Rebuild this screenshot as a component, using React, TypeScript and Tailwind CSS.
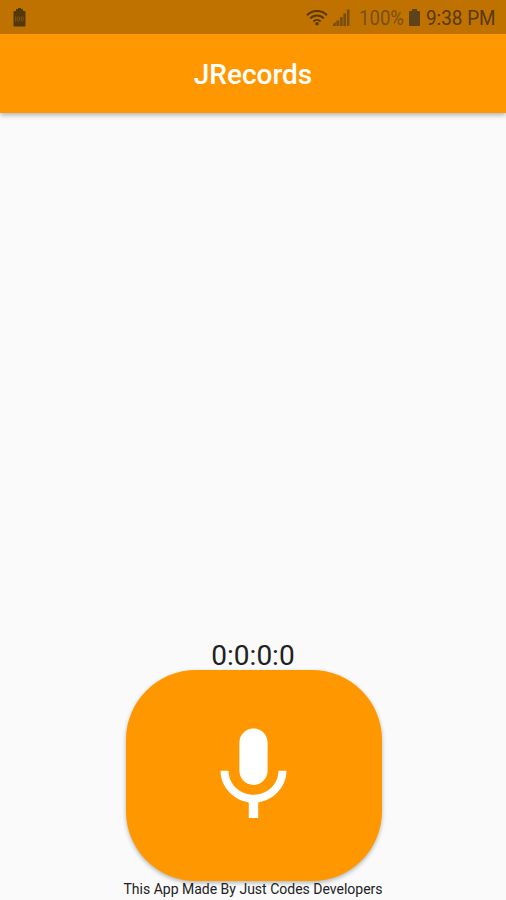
function BatteryNotice() {
	return (
		<svg width="13" height="19" viewBox="0 0 13 19">
			<path
				d="M3 1h2V0h3v1h2v2h1.500a1 1 0 0 1 1 1v13.500a1 1 0 0 1-1 1h-10a1 1 0 0 1-1-1V4a1 1 0 0 1 1-1H3z"
				fill="#553808"
			/>
			<g fill="none" stroke="#80571c" strokeWidth="0.9">
				<path d="M2.700 8.500v5" />
				<rect x="4.500" y="8.800" width="2" height="4.200" rx="0.800" />
				<rect x="8.200" y="8.800" width="2" height="4.200" rx="0.800" />
			</g>
		</svg>
	);
}

function WifiIcon() {
	return (
		<svg width="22" height="17" viewBox="0 0 22 17">
			<g fill="none" stroke="#593807" strokeWidth="2">
				<path d="M1 6.200a14.200 14.200 0 0 1 20 0" />
				<path d="M4.200 9.400a9.600 9.600 0 0 1 13.600 0" />
				<path d="M7.400 12.500a5.100 5.100 0 0 1 7.200 0" />
			</g>
			<circle cx="11" cy="14.800" r="1.800" fill="#593807" />
		</svg>
	);
}

function SignalIcon() {
	return (
		<svg width="17" height="17" viewBox="0 0 17 17" fill="#794f10">
			<path d="M0 15l2.800-2v4H0zM3.400 11.500H6.200V17H3.400zM6.900 8H9.700v9H6.900zM10.400 4.500h2.600V17h-2.600zM13.900 0.500h2.600V17h-2.600z" />
		</svg>
	);
}

function BatteryIcon() {
	return (
		<svg width="11" height="17" viewBox="0 0 11 17" fill="#5c431a">
			<path d="M3 0h5v2h2a1 1 0 0 1 1 1v13a1 1 0 0 1-1 1H1a1 1 0 0 1-1-1V3a1 1 0 0 1 1-1h2z" />
		</svg>
	);
}

function StatusBar() {
	return (
		<div className="flex h-[34px] items-center bg-[#bf7200] pl-[13px] pr-[10px] text-[20px]">
			<BatteryNotice />
			<div className="ml-auto flex items-center">
				<WifiIcon />
				<div className="ml-[5px]">
					<SignalIcon />
				</div>
				<span className="ml-[9px] w-[46px] whitespace-nowrap pt-0.5 text-[#794f10]">
					<span className="inline-block origin-left scale-x-[0.93]">100%</span>
				</span>
				<div className="ml-1">
					<BatteryIcon />
				</div>
				<span className="ml-1.5 w-[70px] whitespace-nowrap pt-0.5 text-[#593807]">
					<span className="inline-block origin-left scale-x-[0.945]">9:38 PM</span>
				</span>
			</div>
		</div>
	);
}

export default function App() {
	return (
		<div className="flex h-[900px] w-[506px] flex-col bg-[#fafafa] font-['Roboto',sans-serif]">
			<header className="bg-[#ff9800] shadow-[0_2px_5px_rgba(0,0,0,0.3)]">
				<StatusBar />
				<h1 className="flex h-[79px] items-center justify-center pt-[3px] text-[28px] font-medium text-white">
					JRecords
				</h1>
			</header>
			<main className="flex flex-1 flex-col items-center justify-end">
				<div className="h-[30px] text-[28px] leading-[31px] text-[#212121]">0:0:0:0</div>
				<button className="ml-px flex h-[211px] w-[256px] items-center justify-center rounded-[70px] bg-[#ff9800] shadow-[0_2px_4px_rgba(0,0,0,0.28)]">
					<svg width="113" height="113" viewBox="0 0 24 24" className="fill-white">
						<path d="M12 14c1.66 0 2.99-1.34 2.99-3L15 5c0-1.66-1.34-3-3-3S9 3.34 9 5v6c0 1.66 1.34 3 3 3zm5.3-3c0 3-2.54 5.1-5.3 5.1S6.7 14 6.7 11H5c0 3.41 2.72 6.23 6 6.72V21h2v-3.28c3.28-.48 6-3.3 6-6.72h-1.7z" />
					</svg>
				</button>
				<p className="h-[19px] text-[14px] leading-[17px] text-[#212121]">
					This App Made By Just Codes Developers
				</p>
			</main>
		</div>
	);
}
